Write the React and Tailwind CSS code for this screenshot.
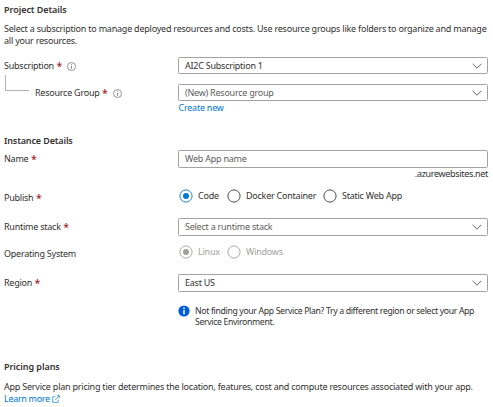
function InfoIcon() {
  return (
    <svg className="h-[9px] w-[9px] shrink-0" viewBox="0 0 9 9" fill="none" stroke="#605e5c">
      <circle cx="4.5" cy="4.5" r="4" strokeWidth="0.65" />
      <path d="M4.5 4v2.8M4.5 2.2v0.9" strokeWidth="0.75" />
    </svg>
  );
}

function Label({ children, required, info, className = "" }) {
  return (
    <div className={`flex items-center ${className}`}>
      <span className="whitespace-nowrap">{children}</span>
      {required && <span className="-mt-px ml-[2.5px] w-[5px] font-['Open_Sans',sans-serif] text-[10.5px] font-semibold text-[#a4262c]">*</span>}
      {info && <span className="ml-[6px] flex"><InfoIcon /></span>}
    </div>
  );
}

function Field({ children, muted, arrow = true, className = "" }) {
  return (
    <div className={`flex w-[310px] items-center justify-between rounded-[1.5px] border border-[#a3a2a0] pr-[5px] pl-[6px] ${muted ? "text-[#605e5c]" : ""} ${className}`}>
      <span>{children}</span>
      {arrow && (
        <svg className="h-[6px] w-[10px]" viewBox="0 0 10 6" fill="none" stroke="#55534f" strokeWidth="0.9">
          <path d="M0.6 0.8L5 5.2L9.4 0.8" />
        </svg>
      )}
    </div>
  );
}

function Radio({ children, checked, disabled, className = "" }) {
  const ring = disabled ? "#a19f9d" : checked ? "#0078d4" : "#3b3a39";
  return (
    <div className={`flex items-center gap-[5px] ${disabled ? "text-[#a19f9d]" : ""} ${className}`}>
      <svg className="h-[14px] w-[14px] shrink-0" viewBox="0 0 14 14">
        <circle cx="7" cy="7" r="6.1" fill="none" stroke={ring} strokeWidth="0.9" />
        {checked && <circle cx="7" cy="7" r="3" fill={ring} />}
      </svg>
      <span className="whitespace-nowrap">{children}</span>
    </div>
  );
}

export default function App() {
  return (
    <main className="h-[407px] w-[493px] overflow-hidden bg-white pl-[4px] font-['Noto_Sans',sans-serif] text-[9px] leading-[12px] tracking-[-0.24px] text-[#323130]">
      <h2 className="pt-[4px] font-semibold tracking-[-0.05px]">Project Details</h2>
      <p className="mt-[7px] whitespace-nowrap tracking-[-0.225px]">
        Select a subscription to manage deployed resources and costs. Use resource groups like folders to organize and manage
        <br />
        all your resources.
      </p>

      <div className="mt-[10px] flex h-[18px]">
        <Label required info className="w-[174px]">Subscription</Label>
        <Field className="h-[17px]">AI2C Subscription 1</Field>
      </div>
      <div className="mt-[9px] flex h-[18px]">
        <div className="flex w-[174px]">
          <div className="-mt-[9px] ml-[1px] h-[16px] w-[24px] border-b border-l border-[#b3b0ad]" />
          <Label required info className="ml-[6px]">Resource Group</Label>
        </div>
        <Field muted className="h-[17px]">(New) Resource group</Field>
      </div>
      <a className="ml-[174.5px] block text-[#0078d4]">Create new</a>

      <h2 className="mt-[21px] font-semibold tracking-[-0.12px]">Instance Details</h2>
      <div className="mt-[3px] flex h-[18px]">
        <Label required className="w-[174px]">Name</Label>
        <Field muted arrow={false} className="h-[18px]">Web App name</Field>
      </div>
      <p className="w-[484px] text-right tracking-[-0.32px]">.azurewebsites.net</p>

      <div className="mt-[9px] flex h-[14px]">
        <Label required className="w-[175px] pt-[4px]">Publish</Label>
        <Radio checked className="w-[48px]">Code</Radio>
        <Radio className="w-[96px]">Docker Container</Radio>
        <Radio>Static Web App</Radio>
      </div>
      <div className="mt-[15px] flex h-[18px]">
        <Label required className="w-[174px]">Runtime stack</Label>
        <Field muted className="h-[18px]">Select a runtime stack</Field>
      </div>
      <div className="mt-[9px] flex h-[14px]">
        <Label className="w-[175px] pt-[4px]">Operating System</Label>
        <Radio checked disabled className="w-[48px]">Linux</Radio>
        <Radio disabled>Windows</Radio>
      </div>
      <div className="mt-[15px] flex h-[18px]">
        <Label required className="w-[174px]">Region</Label>
        <Field className="h-[18px]">East US</Field>
      </div>
      <div className="mt-[13px] ml-[174px] flex">
        <svg className="h-[12px] w-[12px] shrink-0" viewBox="0 0 12 12">
          <circle cx="6" cy="6" r="5.6" fill="#015cda" />
          <path d="M6 5v4.2M6 2.5v1.5" stroke="#fff" strokeWidth="1.5" />
        </svg>
        <p className="ml-[5px] whitespace-nowrap pt-px text-[8.7px] leading-[10.5px] tracking-[-0.34px]">
          Not finding your App Service Plan? Try a different region or select your App
          <br />
          Service Environment.
        </p>
      </div>

      <h2 className="mt-[34px] font-semibold tracking-[-0.05px]">Pricing plans</h2>
      <p className="mt-[8px] whitespace-nowrap tracking-[-0.225px]">
        App Service plan pricing tier determines the location, features, cost and compute resources associated with your app.
      </p>
      <a className="flex items-center text-[#0078d4]">
        <span className="tracking-[-0.32px]">Learn more</span>
        <svg className="ml-[2.5px] h-[8px] w-[8px]" viewBox="0 0 8 8" fill="none" stroke="#0078d4" strokeWidth="0.65">
          <path d="M3.5 1.8H0.7v5.5h5.5V4.5M3.2 4.8L7.2 0.8M4.8 0.6h2.6v2.6" />
        </svg>
      </a>
    </main>
  );
}
